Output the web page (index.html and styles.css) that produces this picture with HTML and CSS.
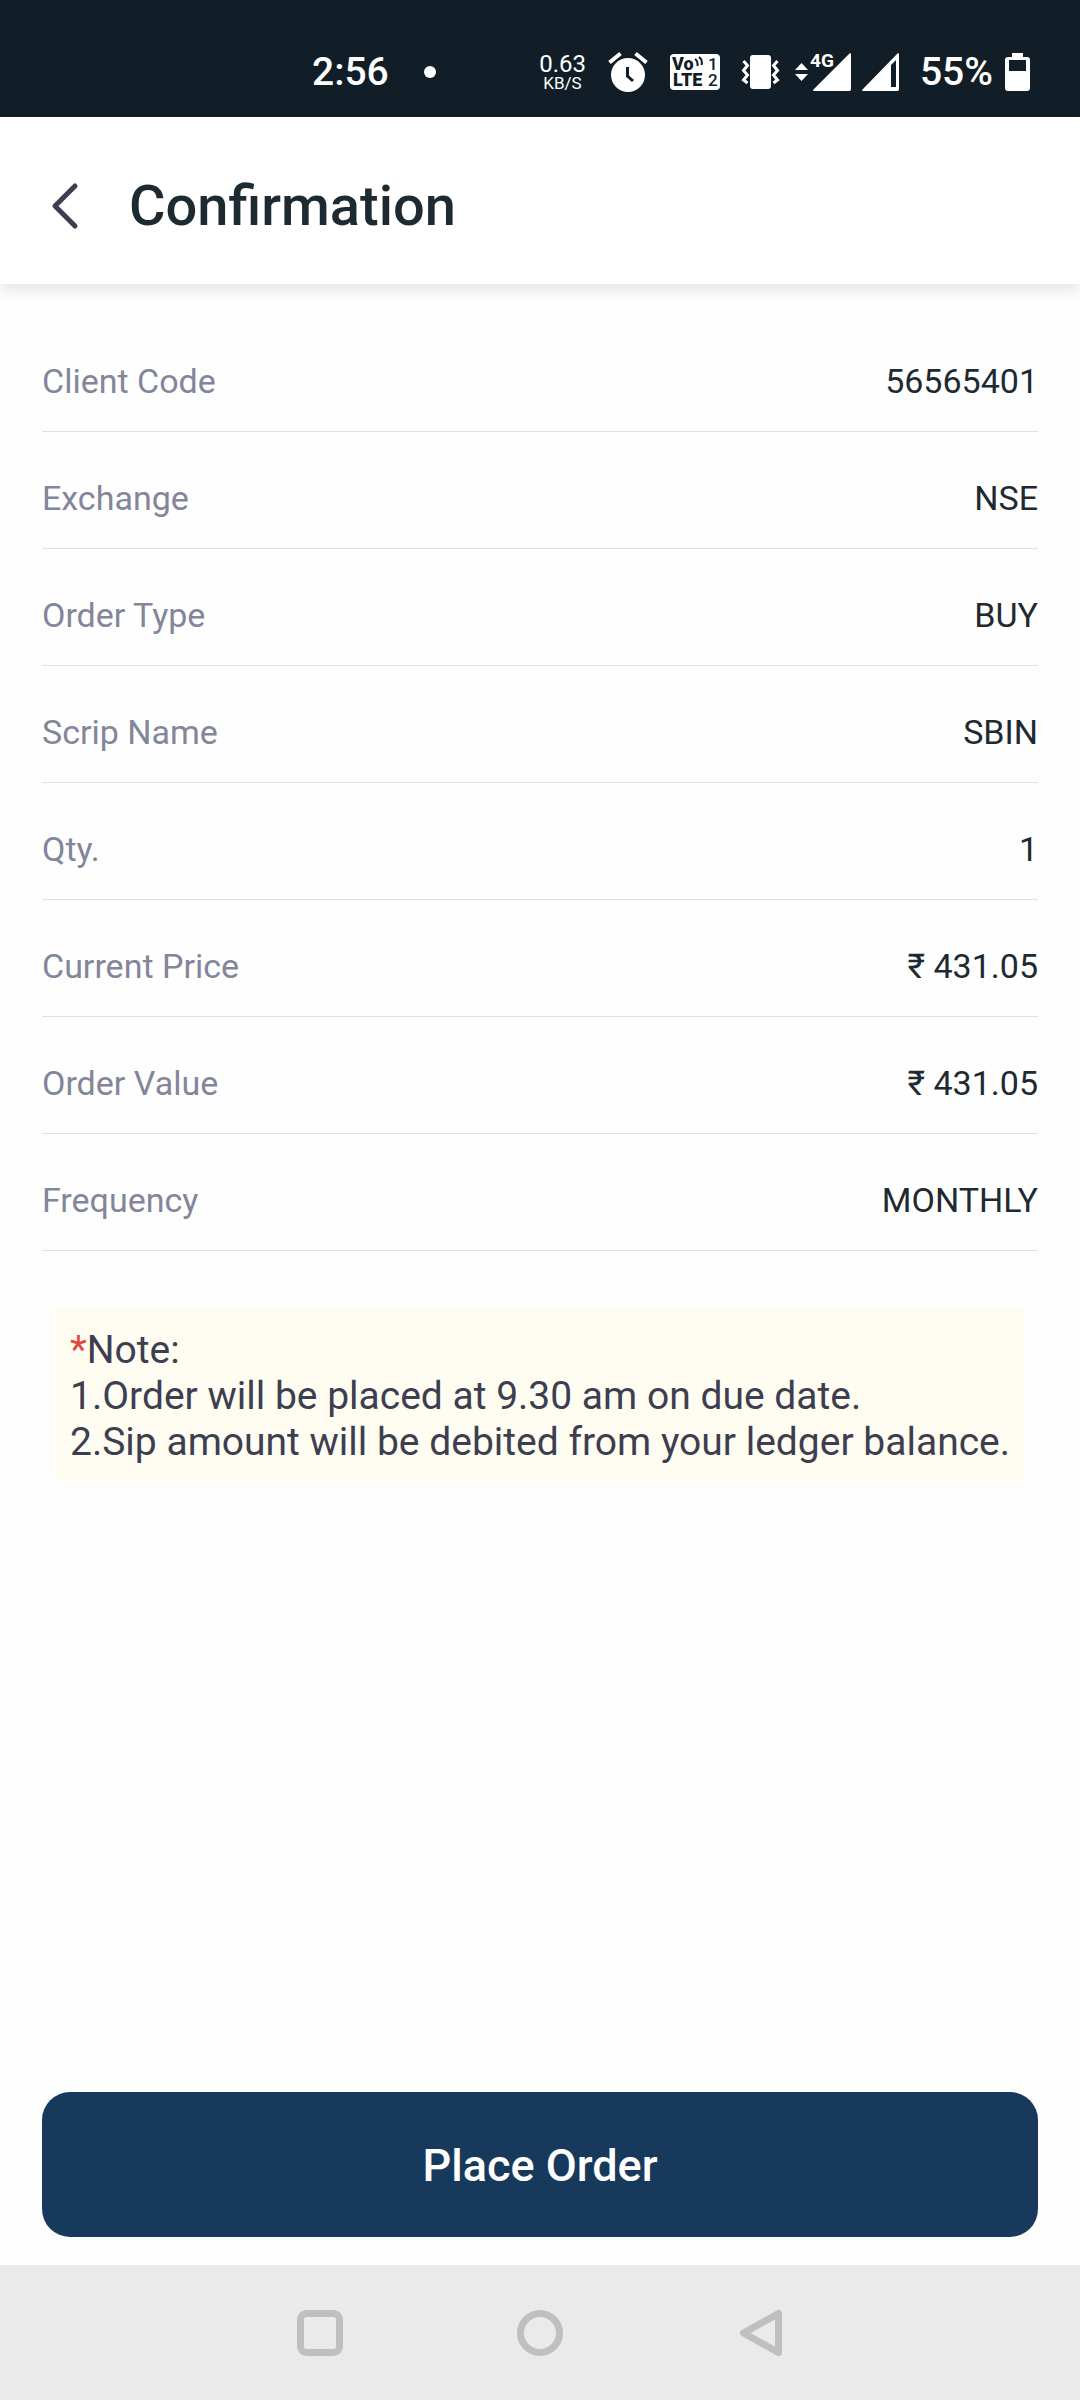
FILE: index.html
```html
<!DOCTYPE html>
<html lang="en">
<head>
    <meta charset="UTF-8">
    <meta name="viewport" content="width=device-width, initial-scale=1.0">
    <title>Confirmation</title>
    <link rel="stylesheet" href="styles.css">
</head>
<body>

    <!-- Phone status bar -->
    <div class="status-bar">
        <div class="status-left">
            <span class="status-text">2:56</span>
            <span class="status-dot"></span>
        </div>
        <div class="status-right">
            <div class="status-icons">
                <div class="net-speed">
                    <span class="net-value">0.63</span>
                    <span class="net-unit">KB/S</span>
                </div>
                <svg width="40" height="40" viewBox="0 0 40 40">
                    <circle cx="20" cy="23" r="17" fill="#fff"/>
                    <path d="M1.500 10.500L12.500 1.500M38.500 10.500L27.500 1.500" stroke="#fff" stroke-width="4"/>
                    <path d="M19.500 15v9l5.500 5" fill="none" stroke="#111e27" stroke-width="3"/>
                </svg>
                <svg width="50" height="36" viewBox="0 0 50 36">
                    <rect width="50" height="36" rx="4" fill="#fff"/>
                    <text class="volte" x="2" y="16">Vo</text>
                    <text class="volte" x="3" y="32">LTE</text>
                    <text class="volte-sim" x="38" y="16">1</text>
                    <text class="volte-sim" x="38" y="32">2</text>
                    <path d="M25 5q3 2 2.500 7M29 3q4 3 2.500 8" fill="none" stroke="#111e27" stroke-width="2"/>
                </svg>
                <svg width="37" height="36" viewBox="0 0 37 36">
                    <rect x="8" y="1" width="21" height="34" rx="3" fill="#fff"/>
                    <path d="M1.500 7l4 4.500-4 5 4 4.500-4 5 4 3M35.500 7l-4 4.500 4 5-4 4.500 4 5-4 3" fill="none" stroke="#fff" stroke-width="3"/>
                </svg>
            </div>
            <div class="signals">
                <svg width="56" height="38" viewBox="0 0 56 38">
                    <path d="M0 17l6.500-7 6.500 7zM0 21h13l-6.500 7z" fill="#fff"/>
                    <path d="M18 37L55 0q1 0 1 2v34q0 2-2 2H19q-1 0-1-1z" fill="#fff"/>
                    <text class="network" x="15" y="14">4G</text>
                </svg>
                <svg width="37" height="38" viewBox="0 0 37 38">
                    <path d="M0 37L36 0q1 0 1 2v34q0 2-2 2H1q-1 0-1-1z" fill="#fff"/>
                    <path d="M29 12l5-5v27h-5z" fill="#111e27"/>
                </svg>
            </div>
            <div class="battery">
                <span class="status-text">55%</span>
                <svg width="25" height="38" viewBox="0 0 25 38">
                    <path d="M7 0h11v4h4q3 0 3 3v28q0 3-3 3H3q-3 0-3-3V7q0-3 3-3h4z" fill="#fff"/>
                    <path d="M4 7h17v11H4z" fill="#111e27"/>
                </svg>
            </div>
        </div>
    </div>

    <header class="header">
        <button class="back-btn" type="button" aria-label="Back">
            <svg width="26" height="46" viewBox="0 0 26 46">
                <path d="M23 3L3 23l20 20" fill="none" stroke="#3d3e50" stroke-width="5" stroke-linecap="round" stroke-linejoin="round"/>
            </svg>
        </button>
        <h1>Confirmation</h1>
    </header>

    <main class="content">
        <!-- Order details -->
        <dl class="details">
            <div class="row">
                <dt>Client Code</dt>
                <dd>56565401</dd>
            </div>
            <div class="row">
                <dt>Exchange</dt>
                <dd>NSE</dd>
            </div>
            <div class="row">
                <dt>Order Type</dt>
                <dd>BUY</dd>
            </div>
            <div class="row">
                <dt>Scrip Name</dt>
                <dd>SBIN</dd>
            </div>
            <div class="row">
                <dt>Qty.</dt>
                <dd>1</dd>
            </div>
            <div class="row">
                <dt>Current Price</dt>
                <dd>₹ 431.05</dd>
            </div>
            <div class="row">
                <dt>Order Value</dt>
                <dd>₹ 431.05</dd>
            </div>
            <div class="row">
                <dt>Frequency</dt>
                <dd>MONTHLY</dd>
            </div>
        </dl>

        <div class="note">
            <p><span class="star">*</span>Note:</p>
            <p>1.Order will be placed at 9.30 am on due date.</p>
            <p>2.Sip amount will be debited from your ledger balance.</p>
        </div>
    </main>

    <div class="actions">
        <button class="place-order" type="button">Place Order</button>
    </div>

    <!-- Phone navigation bar -->
    <nav class="nav-bar">
        <button type="button" aria-label="Recent apps">
            <svg width="46" height="46" viewBox="0 0 46 46">
                <rect x="3.500" y="3.500" width="39" height="39" rx="6"/>
            </svg>
        </button>
        <button type="button" aria-label="Home">
            <svg width="46" height="46" viewBox="0 0 46 46">
                <circle cx="23" cy="23" r="19.500"/>
            </svg>
        </button>
        <button type="button" aria-label="Back">
            <svg width="46" height="46" viewBox="0 0 46 46">
                <path d="M41.500 3.500v39L6.500 23z"/>
            </svg>
        </button>
    </nav>

</body>
</html>
```

FILE: styles.css
```css
* {
    box-sizing: border-box;
}

body {
    font-family: Roboto, "Noto Sans", sans-serif;
    margin: 0;
    min-height: 100vh;
    display: flex;
    flex-direction: column;
    background-color: #fefefe;
    color: #1e2a32;
}

h1, p, dl, dd {
    margin: 0;
}

button {
    font-family: inherit;
    border: none;
    padding: 0;
    background: none;
    cursor: pointer;
}

svg {
    display: block;
    overflow: visible;
}

/* Status bar */
.status-bar {
    display: flex;
    align-items: center;
    justify-content: space-between;
    height: 117px;
    padding: 27px 50px 0 312px;
    background-color: #111e27;
    color: #fff;
}

.status-left {
    display: flex;
    align-items: center;
    gap: 35px;
}

.status-right {
    display: flex;
    align-items: center;
    gap: 16px;
}

.status-icons {
    display: flex;
    align-items: center;
    gap: 22px;
}

.status-text {
    font-size: 39px;
    line-height: 44px;
    font-weight: 500;
}

.status-dot {
    width: 12px;
    height: 12px;
    border-radius: 50%;
    background-color: #fff;
}

.net-speed {
    display: flex;
    flex-direction: column;
    align-items: center;
}

.net-value {
    font-size: 24px;
    line-height: 22px;
}

.net-unit {
    font-size: 17px;
    line-height: 16px;
}

.volte {
    font-size: 18px;
    font-weight: 900;
    fill: #111e27;
}

.volte-sim {
    font-size: 17px;
    font-weight: 500;
    fill: #111e27;
}

.network {
    font-size: 19px;
    font-weight: 700;
    fill: #fff;
    stroke: #111e27;
    stroke-width: 3px;
    paint-order: stroke;
}

.signals {
    display: flex;
    gap: 11px;
}

.battery {
    display: flex;
    align-items: center;
    gap: 12px;
    padding-left: 5px;
}

/* Header */
.header {
    display: flex;
    align-items: center;
    gap: 51px;
    height: 167px;
    padding: 10px 52px 0;
    background-color: #fff;
    box-shadow: 0 4px 16px rgba(0, 0, 0, 0.13);
}

.header h1 {
    font-size: 56px;
    line-height: 66px;
    font-weight: 500;
}

/* Order details */
.content {
    flex: 1;
    padding: 31px 42px;
}

.row {
    display: flex;
    justify-content: space-between;
    padding: 46px 0 30px;
    border-bottom: 1px solid #dedfe2;
    font-size: 34px;
    line-height: 40px;
}

.row dt {
    color: #83869a;
}

.note {
    margin: 56px 14px 0;
    padding: 20px 8px 15px 14px;
    background-color: #fffdf2;
    color: #3d3e50;
    font-size: 39px;
    line-height: 46px;
}

.star {
    color: #e2483d;
}

.actions {
    padding: 28px 42px;
}

.place-order {
    display: block;
    width: 100%;
    padding: 47px 0 45px;
    border-radius: 28px;
    background-color: #173a5c;
    color: #fff;
    font-size: 45px;
    line-height: 53px;
    font-weight: 500;
}

/* Navigation bar */
.nav-bar {
    display: flex;
    align-items: center;
    justify-content: center;
    gap: 174px;
    height: 135px;
    background-color: #eaeaea;
}

.nav-bar svg {
    fill: none;
    stroke: #bfbfbf;
    stroke-width: 7px;
    stroke-linejoin: round;
}
```
